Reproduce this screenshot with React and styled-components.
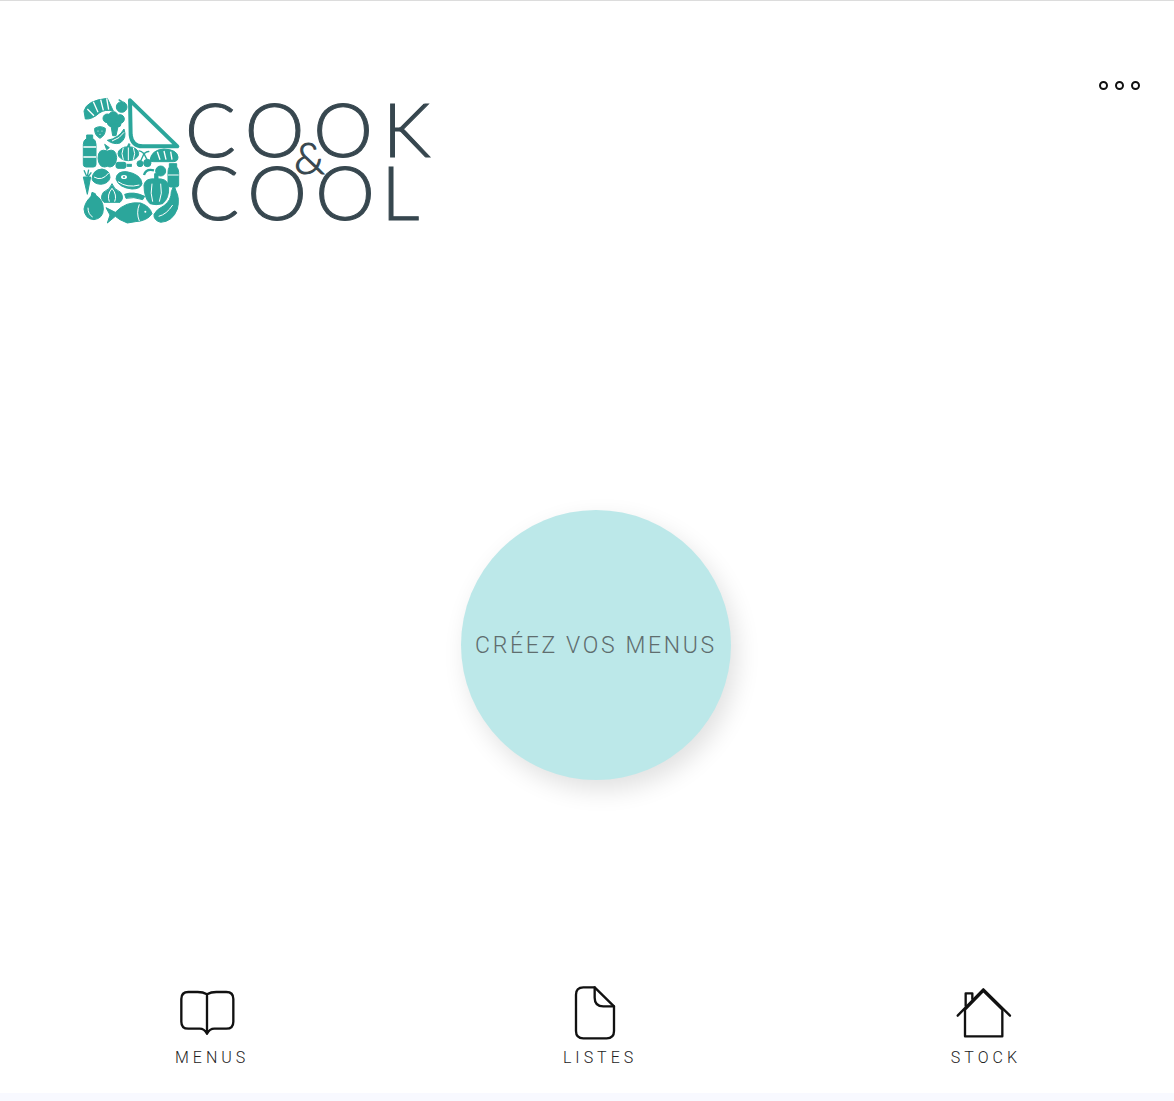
import styled, { createGlobalStyle } from "styled-components";

const GlobalStyle = createGlobalStyle`
  * { box-sizing: border-box; }
  html, body { margin: 0; padding: 0; background: #fff; }
  body { font-family: Roboto, "Liberation Sans", sans-serif; }
`;

const Page = styled.div`
  min-height: 1101px;
  display: flex;
  flex-direction: column;
  border-top: 1px solid #dcdcdc;
  background: #fff;
`;

const Header = styled.header`
  display: flex;
  justify-content: space-between;
  align-items: flex-start;
  padding: 80px 34px 0 70px;
`;

const LogoMark = styled.svg`
  display: block;
  width: 375px;
  height: 150px;
  margin-top: 4px;
`;

const LogoWord = styled.text`
  font-family: Lato, "Open Sans", sans-serif;
  font-weight: 300;
  font-size: 226px;
  fill: #37474f;
  stroke: #37474f;
  stroke-width: 3;
`;

const Amp = styled(LogoWord)`
  font-size: 132px;
`;

const Dots = styled.div`
  display: flex;
  gap: 7px;
`;

const Dot = styled.span`
  width: 9px;
  height: 9px;
  border: 2px solid #111;
  border-radius: 50%;
`;

const Hero = styled.main`
  flex: 1;
  display: flex;
  justify-content: center;
  align-items: flex-start;
  padding: 275px 0 0 18px;
`;

const CreateButton = styled.button`
  width: 270px;
  height: 270px;
  border: none;
  border-radius: 50%;
  padding: 0;
  background: #bce8e9;
  box-shadow: 6px 10px 24px rgba(0, 0, 0, 0.12);
  color: #5f6d6e;
  font-family: Roboto, sans-serif;
  font-weight: 300;
  font-size: 23px;
  letter-spacing: 2.65px;
  white-space: nowrap;
`;

const Nav = styled.nav`
  display: flex;
  justify-content: space-between;
  padding: 0 153px 25px 175px;
`;

const NavItem = styled.a`
  display: flex;
  flex-direction: column;
  align-items: center;
  gap: 8px;
`;

const NavIcon = styled.svg`
  display: block;
  height: 56px;
  margin-right: ${(p) => p.$shift}px;
  fill: none;
  stroke: #111;
  stroke-width: 7;
  stroke-linejoin: round;
  stroke-linecap: round;
`;

const NavLabel = styled.span`
  font-weight: 300;
  font-size: 16px;
  line-height: 20px;
  letter-spacing: 4px;
  color: #222;
`;

const BottomBand = styled.div`
  height: 8px;
  background: #f8f9ff;
`;

const TEAL = "#2ba69b";

const Foods = () => (
  <g fill={TEAL} stroke={TEAL} strokeWidth="3">
    {/* folded corner */}
    <path d="M180 46 L322 184 L218 184 Q186 184 182 150 Z" fill="none" stroke={TEAL} strokeWidth="12" strokeLinejoin="round" />
    {/* croissant */}
    <path d="M42 78 Q50 46 112 40 L130 78 Q104 72 88 84 Q66 104 46 102 Z" />
    <path d="M70 50 L84 82 M92 44 L100 76 M110 40 L116 74 M52 72 L72 92" stroke="#fff" strokeWidth="4" fill="none" />
    {/* tomato */}
    <circle cx="155" cy="66" r="16" />
    <path d="M146 44 L156 50" stroke={TEAL} strokeWidth="4" />
    {/* broccoli */}
    <circle cx="112" cy="100" r="13" /><circle cx="130" cy="94" r="14" /><circle cx="150" cy="102" r="13" /><circle cx="125" cy="112" r="13" /><circle cx="143" cy="116" r="10" />
    <path d="M122 116 L146 116 L138 152 L128 152 Z" />
    {/* strawberry */}
    <path d="M74 130 Q90 120 106 130 Q108 150 90 160 Q72 150 74 130 Z" />
    <circle cx="84" cy="138" r="1.6" fill="#fff" stroke="none" /><circle cx="96" cy="138" r="1.6" fill="#fff" stroke="none" /><circle cx="90" cy="148" r="1.6" fill="#fff" stroke="none" />
    {/* banana */}
    <path d="M112 166 Q146 160 162 132 Q172 160 150 174 Q130 180 112 166 Z" />
    <path d="M126 168 Q150 160 162 142" stroke="#fff" strokeWidth="3" fill="none" />
    {/* bottle */}
    <path d="M50 150 H68 V160 Q78 166 78 178 V238 Q78 246 70 246 H48 Q40 246 40 238 V178 Q40 166 50 160 Z" />
    <path d="M40 186 H78 M40 216 H78" stroke="#fff" strokeWidth="4" />
    {/* apple */}
    <path d="M112 198 Q84 188 84 220 Q86 246 104 246 Q112 242 120 246 Q138 244 140 218 Q138 188 112 198 Z" />
    <path d="M110 194 L104 178 L118 188 Z" />
    {/* pumpkin */}
    <ellipse cx="175" cy="206" rx="31" ry="21" />
    <path d="M175 186 V226 M160 188 Q152 206 160 224 M190 188 Q198 206 190 224" stroke="#fff" strokeWidth="3" fill="none" />
    <path d="M172 186 L176 176 L180 178 L178 186 Z" />
    {/* cherries */}
    <circle cx="210" cy="236" r="9" /><circle cx="232" cy="234" r="11" />
    <path d="M212 228 L222 206 L232 226 M222 206 Q212 196 206 198 M222 206 Q232 198 238 200" stroke={TEAL} strokeWidth="4" fill="none" />
    {/* bread */}
    <path d="M240 226 Q244 194 282 192 Q322 194 324 216 Q324 230 310 230 H250 Q240 230 240 226 Z" />
    <path d="M262 200 L270 224 M282 198 L288 224 M302 200 L306 224" stroke="#fff" strokeWidth="4" fill="none" />
    {/* small pan */}
    <rect x="138" y="232" width="30" height="18" rx="6" />
    <rect x="172" y="238" width="12" height="6" />
    {/* carrot */}
    <path d="M40 276 H62 L52 328 Z" />
    <path d="M50 274 L42 256 M52 274 L56 254 M54 276 L64 262" stroke={TEAL} strokeWidth="4" />
    {/* cheese */}
    <path d="M66 282 Q68 254 96 252 Q120 256 120 278 Q116 296 92 298 Q70 296 66 282 Z" />
    <path d="M72 276 Q96 290 116 264" stroke="#fff" strokeWidth="3" fill="none" />
    {/* steak */}
    <path d="M138 282 Q140 258 170 260 Q214 268 216 296 Q212 312 186 312 Q146 308 138 282 Z" />
    <ellipse cx="162" cy="276" rx="9" ry="6" fill="#fff" stroke="none" />
    <circle cx="162" cy="276" r="3" stroke="none" />
    <path d="M144 290 Q172 310 208 300" stroke="#fff" strokeWidth="3" fill="none" />
    {/* tomato and jar */}
    <circle cx="272" cy="258" r="15" />
    <path d="M222 270 Q228 250 252 256" stroke={TEAL} strokeWidth="7" fill="none" />
    <path d="M298 236 H320 V246 Q326 252 326 262 V300 Q326 306 318 306 H302 Q294 306 294 298 V262 Q294 252 298 246 Z" />
    <path d="M294 270 H326" stroke="#fff" strokeWidth="3" />
    {/* pepper */}
    <path d="M222 300 Q226 278 258 282 Q292 278 296 304 Q298 340 278 356 Q258 362 240 356 Q222 340 222 300 Z" />
    <path d="M258 264 V284 M246 296 Q240 326 248 350 M272 296 Q278 326 268 350" stroke="#fff" strokeWidth="3" fill="none" />
    <path d="M254 266 H264 V284 H254 Z" />
    {/* garlic */}
    <path d="M126 296 Q130 312 152 322 Q164 340 150 352 H102 Q88 340 100 322 Q122 312 126 296 Z" />
    <path d="M126 310 Q110 330 118 350 M126 310 Q142 330 134 350" stroke="#fff" strokeWidth="3" fill="none" />
    {/* sausage */}
    <path d="M164 328 Q190 318 224 334 L218 344 Q190 334 168 340 Z" />
    {/* eggplant */}
    <path d="M76 330 Q100 344 100 372 Q100 400 72 404 Q44 402 42 372 Q46 348 66 332 Z" />
    <path d="M66 322 L76 326 L80 340 L62 340 Z" />
    <path d="M54 368 Q54 388 68 396" stroke="#fff" strokeWidth="3" fill="none" />
    {/* fish */}
    <path d="M108 368 L136 382 Q168 348 212 354 Q240 364 246 386 Q232 408 196 410 L172 414 L150 404 L136 394 L112 414 L120 390 Z" />
    <path d="M208 358 Q198 384 208 408" stroke="#fff" strokeWidth="3" fill="none" />
    <circle cx="226" cy="380" r="3" fill="#fff" stroke="none" />
    {/* aubergine */}
    <path d="M312 300 L318 318 Q330 340 322 372 Q308 410 272 412 Q250 406 252 388 Q258 374 282 362 Q304 346 304 320 Z" />
    <path d="M266 394 Q290 388 308 360" stroke="#fff" strokeWidth="3" fill="none" />
  </g>
);

const Logo = () => (
  <LogoMark viewBox="0 0 1125 450">
    <Foods />
    <LogoWord x="345 524 730 938" y="215">COOK</LogoWord>
    <LogoWord x="355 532 736 934" y="405">COOL</LogoWord>
    <Amp x="672" y="266">&amp;</Amp>
  </LogoMark>
);

export default function App() {
  return (
    <Page>
      <GlobalStyle />
      <Header>
        <Logo />
        <Dots>
          <Dot />
          <Dot />
          <Dot />
        </Dots>
      </Header>
      <Hero>
        <CreateButton>CRÉEZ VOS MENUS</CreateButton>
      </Hero>
      <Nav>
        <NavItem>
          <NavIcon viewBox="50 27 180 168" width="60" $shift={10}>
            <path d="M140 58 Q128 51 112 51 H84 Q63 51 63 72 V140 Q63 161 84 161 H118 Q132 161 140 176 Q148 161 162 161 H198 Q219 161 219 140 V72 Q219 51 198 51 H168 Q152 51 140 58 V176" />
          </NavIcon>
          <NavLabel>MENUS</NavLabel>
        </NavItem>
        <NavItem>
          <NavIcon viewBox="60 27 150 168" width="50" $shift={11}>
            <path d="M134 37 H100 Q78 37 78 59 V168 Q78 190 100 190 H170 Q192 190 192 168 V94 Z" />
            <path d="M134 37 V68 Q134 94 160 94 H192" />
          </NavIcon>
          <NavLabel>LISTES</NavLabel>
        </NavItem>
        <NavItem>
          <NavIcon viewBox="40 27 180 168" width="60" $shift={6}>
            <path d="M54 122 L131 43 L211 122" />
            <path d="M76 104 V184 H188 V104 L131 48 Z" />
            <path d="M78 92 V55 H98 V72" />
          </NavIcon>
          <NavLabel>STOCK</NavLabel>
        </NavItem>
      </Nav>
      <BottomBand />
    </Page>
  );
}
